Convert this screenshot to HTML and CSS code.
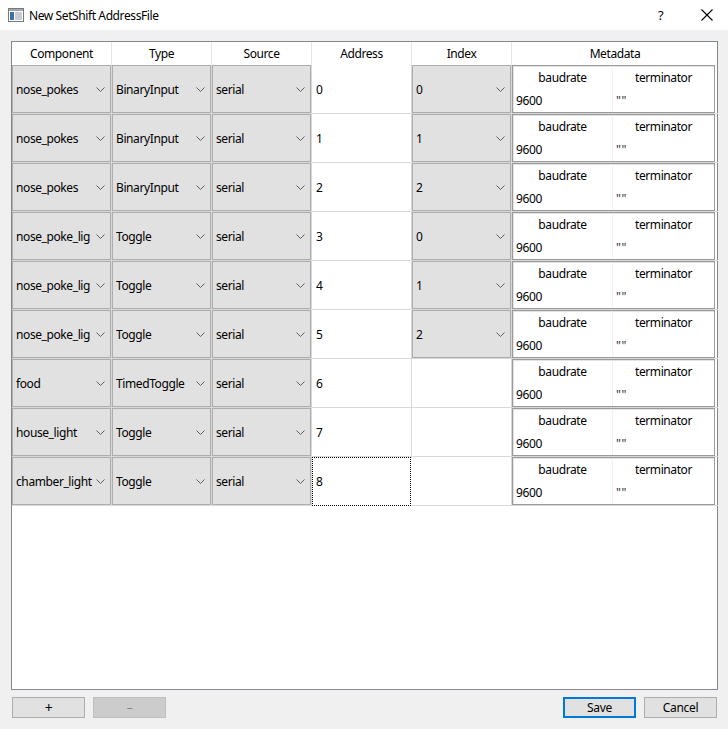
FILE: index.html
```html
<!DOCTYPE html>
<html>
<head>
<meta charset="utf-8">
<link rel="stylesheet" href="styles.css">
</head>
<body>
<div class="window">
  <div class="titlebar">
    <svg class="appicon" width="16" height="14" viewBox="0 0 16 14">
      <rect x="0.5" y="0.5" width="15" height="13" fill="#fff" stroke="#7a7a7a"/>
      <rect x="1" y="1" width="14" height="2" fill="#9aa6b4"/>
      <rect x="2" y="4" width="4" height="8" fill="#3f6fa8"/>
      <rect x="7" y="4" width="7" height="8" fill="#c8cdd3"/>
    </svg>
    <span class="title">New SetShift AddressFile</span>
    <span class="help">?</span>
    <svg class="close" width="12" height="12" viewBox="0 0 12 12">
      <path d="M0.5 0.5 L11.5 11.5 M11.5 0.5 L0.5 11.5" stroke="#000" stroke-width="1.1" fill="none"/>
    </svg>
  </div>
  <div class="content">
    <div class="frame">
      <div class="row header">
        <div class="hcell">Component</div>
        <div class="hcell">Type</div>
        <div class="hcell">Source</div>
        <div class="hcell">Address</div>
        <div class="hcell">Index</div>
        <div class="hcell last">Metadata</div>
      </div>
      <div id="rows"></div>
    </div>
    <div class="footer">
      <button class="btn plus">+</button>
      <button class="btn disabled">–</button>
      <div class="spacer"></div>
      <button class="btn default">Save</button>
      <button class="btn">Cancel</button>
    </div>
  </div>
</div>
<script src="script.js"></script>
</body>
</html>
```

FILE: script.js
```js
const data = [
  ["nose_pokes","BinaryInput","serial","0","0"],
  ["nose_pokes","BinaryInput","serial","1","1"],
  ["nose_pokes","BinaryInput","serial","2","2"],
  ["nose_poke_lig","Toggle","serial","3","0"],
  ["nose_poke_lig","Toggle","serial","4","1"],
  ["nose_poke_lig","Toggle","serial","5","2"],
  ["food","TimedToggle","serial","6",null],
  ["house_light","Toggle","serial","7",null],
  ["chamber_light","Toggle","serial","8",null]
];
const chev = '<svg class="chev" width="9" height="5" viewBox="0 0 9 5"><polyline points="0.5,0.5 4.5,4.5 8.5,0.5" fill="none" stroke="#606060" stroke-width="1"/></svg>';
function combo(t){
  return '<div class="cell"><div class="combo"><span class="ctext">'+t+'</span>'+chev+'</div></div>';
}
let html = '';
data.forEach((r,i)=>{
  html += '<div class="row">';
  html += combo(r[0]) + combo(r[1]) + combo(r[2]);
  html += '<div class="cell text'+(i===8?' focus':'')+'"><span>'+r[3]+'</span></div>';
  html += r[4]===null ? '<div class="cell"></div>' : combo(r[4]);
  html += '<div class="cell meta"><div class="subtable">'+
    '<div class="sh">baudrate</div><div class="sh">terminator</div>'+
    '<div class="sv">9600</div><div class="sv quote">""</div></div></div>';
  html += '</div>';
});
document.getElementById('rows').innerHTML = html;
```

FILE: styles.css
```css
* { box-sizing: border-box; }
html, body { margin: 0; padding: 0; }
body {
  width: 728px;
  height: 729px;
  background: #f0f0f0;
  font-family: "Noto Sans", "Liberation Sans", sans-serif;
  font-size: 12px;
  letter-spacing: -0.4px;
  color: #000;
  overflow: hidden;
}
.titlebar {
  height: 30px;
  background: #fff;
  display: flex;
  align-items: center;
  position: relative;
}
.appicon { margin-left: 8px; margin-right: 5px; }
.title { font-size: 12px; }
.help { position: absolute; left: 658px; top: 6px; font-size: 13px; }
.close { position: absolute; left: 701px; top: 9px; }
.content {
  padding: 11px 10px 0 11px;
}
.frame {
  height: 649px;
  border: 1px solid #828790;
  background: #fff;
}
.row {
  display: grid;
  grid-template-columns: 100px 100px 100px 100px 100px 206px;
  height: 49px;
}
.row.header { height: 23px; }
.hcell {
  display: flex;
  align-items: center;
  justify-content: center;
  border-right: 1px solid #e5e5e5;
  padding-bottom: 1px;
}
.hcell.last { border-right: none; }
.cell {
  border-right: 1px solid #d8d8d8;
  border-bottom: 1px solid #d8d8d8;
  position: relative;
}
.combo {
  height: 48px;
  width: 99px;
  background: #e1e1e1;
  border: 1px solid #adadad;
  display: flex;
  align-items: center;
  padding-left: 3px;
  padding-right: 5px;
}
.ctext { flex: 1; white-space: nowrap; overflow: hidden; }
.chev { flex: none; margin-top: 1px; }
.text {
  display: flex;
  align-items: center;
  padding-left: 4px;
}
.text.focus {
  border: 1px dotted #000;
  margin: 0 1px 0 0;
  padding-left: 3px;
}
.cell.meta { border-right: none; }
.subtable {
  width: 203px;
  height: 48px;
  border: 1px solid #9a9a9a;
  box-shadow: inset 1px 1px 0 #e3e3e3;
  display: grid;
  grid-template-columns: 100px 101px;
  grid-template-rows: 23px 23px;
}
.sh {
  display: flex;
  align-items: center;
  justify-content: center;
  border-right: 1px solid #f0f0f0;
}
.sv {
  display: flex;
  align-items: center;
  padding-left: 3px;
  border-right: 1px solid #f0f0f0;
}
.sv.quote { letter-spacing: 0.6px; color: #333; }
.sh:nth-child(2), .sv:nth-child(4) { border-right: none; }
.footer {
  display: flex;
  margin-top: 7px;
  padding-left: 1px;
  padding-right: 1px;
  gap: 8px;
}
.spacer { flex: 1; }
.btn {
  width: 73px;
  height: 21px;
  background: #e1e1e1;
  border: 1px solid #adadad;
  font-family: "Noto Sans", "Liberation Sans", sans-serif;
  font-size: 12px;
  letter-spacing: -0.3px;
  color: #000;
  padding: 0;
  margin: 0;
  line-height: 17px;
}
.btn.plus { font-size: 14px; line-height: 17px; }
.btn.disabled {
  background: #cccccc;
  border-color: #bfbfbf;
  color: #838383;
}
.btn.default {
  border: 2px solid #0078d7;
  line-height: 15px;
}
```
